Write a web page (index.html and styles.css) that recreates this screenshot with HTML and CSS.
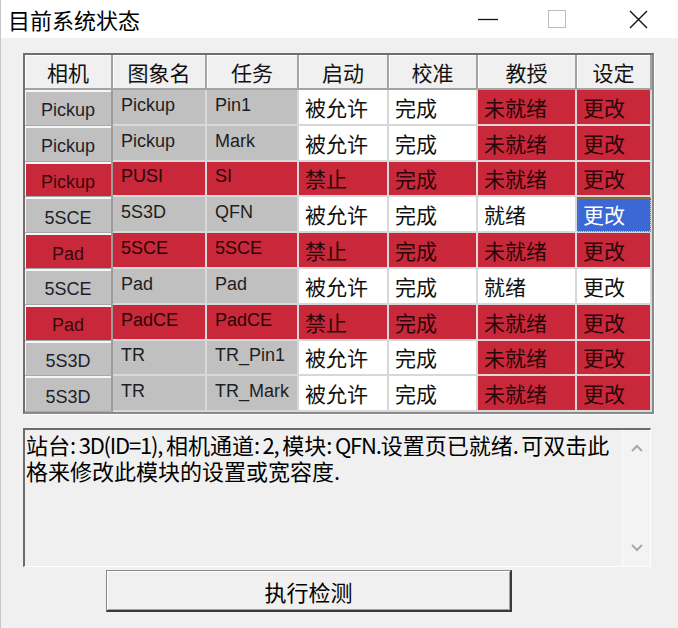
FILE: index.html
```html
<!DOCTYPE html>
<html lang="zh-CN">
<head>
<meta charset="utf-8">
<title>目前系统状态</title>
<link rel="stylesheet" href="styles.css">
</head>
<body>
<div class="window">
  <div class="titlebar">
    <span class="title">目前系统状态</span>
    <div class="controls">
      <svg class="ic-min" width="20" height="20" viewBox="0 0 20 20"><line x1="0" y1="10.5" x2="20" y2="10.5" stroke="#111" stroke-width="1.3"/></svg>
      <svg class="ic-max" width="18" height="18" viewBox="0 0 18 18"><rect x="0.5" y="0.5" width="17" height="17" fill="none" stroke="#bdbdbd" stroke-width="1"/></svg>
      <svg class="ic-close" width="19" height="19" viewBox="0 0 19 19"><path d="M1 1 L18 18 M18 1 L1 18" stroke="#111" stroke-width="1.4" fill="none"/></svg>
    </div>
  </div>
  <div class="content">
    <div class="frame">
      <div class="grid">
        <div class="hd">相机</div><div class="hd">图象名</div><div class="hd">任务</div><div class="hd">启动</div><div class="hd">校准</div><div class="hd">教授</div><div class="hd">设定</div>

        <div class="cam g">Pickup</div><div class="c g lat">Pickup</div><div class="c g lat">Pin1</div><div class="c w">被允许</div><div class="c w">完成</div><div class="c r">未就绪</div><div class="c r">更改</div>

        <div class="cam g">Pickup</div><div class="c g lat">Pickup</div><div class="c g lat">Mark</div><div class="c w">被允许</div><div class="c w">完成</div><div class="c r">未就绪</div><div class="c r">更改</div>

        <div class="cam r">Pickup</div><div class="c r lat">PUSI</div><div class="c r lat">SI</div><div class="c r">禁止</div><div class="c r">完成</div><div class="c r">未就绪</div><div class="c r">更改</div>

        <div class="cam g">5SCE</div><div class="c g lat">5S3D</div><div class="c g lat">QFN</div><div class="c w">被允许</div><div class="c w">完成</div><div class="c w">就绪</div><div class="c sel"><span class="focus">更改</span></div>

        <div class="cam r">Pad</div><div class="c r lat">5SCE</div><div class="c r lat">5SCE</div><div class="c r">禁止</div><div class="c r">完成</div><div class="c r">未就绪</div><div class="c r">更改</div>

        <div class="cam g">5SCE</div><div class="c g lat">Pad</div><div class="c g lat">Pad</div><div class="c w">被允许</div><div class="c w">完成</div><div class="c w">就绪</div><div class="c w">更改</div>

        <div class="cam r">Pad</div><div class="c r lat">PadCE</div><div class="c r lat">PadCE</div><div class="c r">禁止</div><div class="c r">完成</div><div class="c r">未就绪</div><div class="c r">更改</div>

        <div class="cam g">5S3D</div><div class="c g lat">TR</div><div class="c g lat">TR_Pin1</div><div class="c w">被允许</div><div class="c w">完成</div><div class="c r">未就绪</div><div class="c r">更改</div>

        <div class="cam g">5S3D</div><div class="c g lat">TR</div><div class="c g lat">TR_Mark</div><div class="c w">被允许</div><div class="c w">完成</div><div class="c r">未就绪</div><div class="c r">更改</div>
      </div>
    </div>

    <div class="memo">
      <div class="memo-text"><p class="line">站台<span class="nar">: 3D(ID=1),&nbsp;</span>相机通道<span class="nar">: 2,&nbsp;</span>模块<span class="nar">: QFN.</span>设置页已就绪<span class="nar">.&nbsp;</span>可双击此</p><p class="line">格来修改此模块的设置或宽容度.</p></div>
      <div class="scroll">
        <svg width="12" height="8" viewBox="0 0 12 8"><path d="M1 7 L6 2 L11 7" fill="none" stroke="#a8a8a8" stroke-width="2"/></svg>
        <svg width="12" height="8" viewBox="0 0 12 8"><path d="M1 1 L6 6 L11 1" fill="none" stroke="#a8a8a8" stroke-width="2"/></svg>
      </div>
    </div>

    <button class="run" type="button">执行检测</button>
  </div>
</div>
</body>
</html>
```

FILE: styles.css
```css
html, body {
  margin: 0;
  padding: 0;
}
body {
  width: 678px;
  height: 628px;
  overflow: hidden;
  background: #f0f0f0;
  font-family: "Noto Sans CJK SC", "Liberation Sans", sans-serif;
  color: #000;
}
.window {
  height: 628px;
  box-sizing: border-box;
  border-left: 1px solid #c6c6c6;
}
.titlebar {
  height: 38px;
  background: #fff;
  display: flex;
  align-items: center;
}
.title {
  font-size: 22px;
  line-height: 1;
  padding-left: 7px;
  color: #000;
}
.controls {
  margin-left: auto;
  display: flex;
  align-items: center;
  padding-right: 30px;
}
.ic-min { margin-right: 50px; }
.ic-max { margin-right: 63px; }

.content {
  padding: 15px 0 0 22px;
}
.frame {
  width: 631px;
  box-sizing: border-box;
  border: 2px solid #6f6f6f;
  border-right-color: #8a8a8a;
  border-bottom-color: #8a8a8a;
  box-shadow: 1px 1px 0 #ffffff;
}
.grid {
  display: grid;
  grid-template-columns: 88px 94px 92px 90px 89px 99px 75px;
  grid-template-rows: 35px repeat(9, 35.8px);
  background: #fff;
}
.grid > div {
  box-sizing: border-box;
  display: flex;
  align-items: center;
  white-space: nowrap;
  overflow: hidden;
}
.hd {
  justify-content: center;
  background: #f0f0f0;
  font-size: 21px;
  color: #111;
  border-right: 2px solid #a3a3a3;
  border-bottom: 2px solid #a3a3a3;
  box-shadow: inset 1px 1px 0 #ffffff;
}
.cam {
  justify-content: center;
  font-family: "Liberation Sans", "Noto Sans CJK SC", sans-serif;
  font-size: 18px;
  padding-top: 7px;
  border-right: 2px solid #9c9c9c;
  border-bottom: 1px solid #a8a8a8;
  box-shadow: inset 0 2px 0 #f6f6f6, inset 1px 0 0 #f6f6f6;
}
.c {
  padding-left: 6px;
  font-size: 21px;
  border-right: 2px solid #d8d8d8;
  border-bottom: 2px solid #d8d8d8;
}
.lat {
  font-family: "Liberation Sans", "Noto Sans CJK SC", sans-serif;
  font-size: 18px;
  padding-left: 8px;
  padding-bottom: 3px;
}
.g { background: #c0c0c0; color: #1e1e1e; }
.w { background: #ffffff; color: #111; }
.r { background: #c8283a; color: #2a0508; }
.cam.g { color: #1e1e2a; }
.cam.r { color: #3a080c; }
.sel {
  background: #3c68d6;
  color: #ffffff;
  outline: 1px dotted #8c7a48;
  outline-offset: -2px;
}

.memo {
  margin-top: 14px;
  width: 628px;
  height: 139px;
  box-sizing: border-box;
  display: flex;
  border-top: 2px solid #6c6c6c;
  border-left: 2px solid #6c6c6c;
  border-right: 1px solid #ffffff;
  border-bottom: 1px solid #ffffff;
  background: #f0f0f0;
}
.memo-text {
  flex: 1;
  padding: 1px 0 0 1px;
  font-size: 22px;
  line-height: 26px;
  white-space: nowrap;
  color: #000;
}
.line {
  margin: 0;
  height: 26px;
}
.nar {
  display: inline-block;
  vertical-align: top;
  height: 26px;
  line-height: 26px;
  letter-spacing: -1.2px;
}
.scroll {
  width: 28px;
  display: flex;
  flex-direction: column;
  align-items: center;
  justify-content: space-between;
  padding: 14px 0 14px;
  box-sizing: border-box;
  background: #f3f3f3;
  border-left: 1px solid #fbfbfb;
}

.run {
  display: block;
  margin: 3px 0 0 83px;
  width: 406px;
  height: 42px;
  box-sizing: border-box;
  background: #f0f0f0;
  border-style: solid;
  border-width: 1px 2px 2px 1px;
  border-color: #8a8a8a #3a3a3a #3a3a3a #8a8a8a;
  box-shadow: inset 1px 1px 0 #ffffff, inset -1px -1px 0 #a0a0a0;
  font-family: "Noto Sans CJK SC", sans-serif;
  font-size: 22px;
  line-height: 1;
  color: #000;
  padding: 0;
}
```
